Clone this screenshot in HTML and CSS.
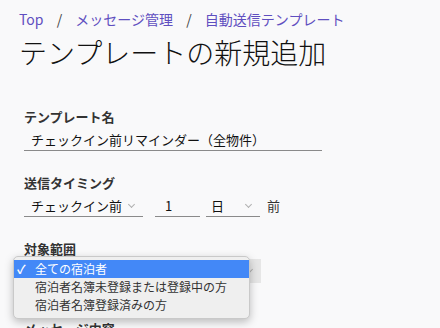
FILE: index.html
```html
<!DOCTYPE html>
<html lang="ja">
<head>
    <meta charset="UTF-8">
    <meta name="viewport" content="width=device-width, initial-scale=1.0">
    <title>テンプレートの新規追加</title>
    <link rel="stylesheet" href="styles.css">
</head>
<body>
    <nav class="breadcrumb">
        <a href="#">Top</a>
        <span class="sep">/</span>
        <a href="#">メッセージ管理</a>
        <span class="sep">/</span>
        <a href="#">自動送信テンプレート</a>
    </nav>
    <h1 class="page-title">テンプレートの新規追加</h1>

    <form class="template-form">
        <div class="field">
            <label class="field-label">テンプレート名</label>
            <div class="text-input wide">チェックイン前リマインダー（全物件）</div>
        </div>

        <div class="field">
            <label class="field-label">送信タイミング</label>
            <div class="timing-row">
                <div class="select-box base">チェックイン前<span class="chevron"></span></div>
                <div class="text-input num">1</div>
                <div class="select-box unit">日<span class="chevron"></span></div>
                <span class="suffix">前</span>
            </div>
        </div>

        <div class="field scope-field">
            <label class="field-label">対象範囲</label>
            <div class="scope-wrap">
                <div class="select-box scope"><span class="chevron"></span></div>
                <ul class="dropdown">
                    <li class="selected"><span class="check">✓</span>全ての宿泊者</li>
                    <li>宿泊者名簿未登録または登録中の方</li>
                    <li>宿泊者名簿登録済みの方</li>
                </ul>
            </div>
        </div>

        <div class="field">
            <label class="field-label">メッセージ内容</label>
        </div>
    </form>
</body>
</html>
```

FILE: styles.css
```css
html, body {
    height: 328px;
    overflow: hidden;
}
body {
    margin: 0;
    padding: 9px 19px 0;
    box-sizing: border-box;
    background: #f9f9fa;
    color: #222;
    font-family: "Noto Sans CJK JP", "Noto Sans", sans-serif;
}
.breadcrumb {
    font-size: 14px;
    line-height: 20px;
}
.breadcrumb a {
    color: #5f4fc0;
    text-decoration: none;
}
.breadcrumb .sep {
    color: #444;
    margin: 0 10px;
}
.page-title {
    margin: 6px 0 0;
    font-size: 28px;
    font-weight: 300;
    line-height: 34px;
    color: #111;
}
.template-form {
    padding-left: 5px;
    margin-top: 39px;
}
.field {
    margin-bottom: 23px;
}
.scope-field {
    margin-bottom: 37px;
}
.field-label {
    display: block;
    font-size: 13px;
    font-weight: bold;
    color: #333;
    line-height: 18px;
}
.text-input, .select-box {
    font-size: 13px;
    line-height: 20px;
    padding-top: 4px;
    color: #111;
    border-bottom: 1px solid #8a8a8a;
    box-sizing: border-box;
}
.text-input {
    padding-left: 7px;
}
.wide {
    width: 298px;
}
.timing-row {
    display: flex;
    align-items: flex-end;
    gap: 12px;
}
.select-box {
    position: relative;
    padding-left: 7px;
}
.chevron {
    position: absolute;
    right: 9px;
    top: 10px;
    width: 4px;
    height: 4px;
    border-right: 1px solid #b0b0b0;
    border-bottom: 1px solid #b0b0b0;
    transform: rotate(45deg);
}
.base {
    width: 119px;
}
.num {
    width: 45px;
    padding-left: 10px;
}
.unit {
    width: 54px;
    margin-left: -6px;
    padding-left: 5px;
}
.suffix {
    font-size: 13px;
    line-height: 20px;
    color: #333;
    margin-left: -5px;
    padding-bottom: 1px;
}
.scope-wrap {
    position: relative;
    height: 24px;
    margin-top: 1px;
}
.scope {
    width: 237px;
    height: 24px;
    padding-top: 0;
    background: #e6e6e6;
    border-bottom: none;
}
.scope .chevron {
    top: 8px;
}
.dropdown {
    position: absolute;
    z-index: 1;
    left: -11px;
    top: -3px;
    width: 237px;
    margin: 0;
    padding: 3px 0 4px;
    list-style: none;
    background: #efefef;
    border: 1px solid #c9c9c9;
    border-radius: 5px;
    box-shadow: 0 3px 8px rgba(0, 0, 0, 0.25);
    font-size: 12px;
    color: #333;
    box-sizing: border-box;
}
.dropdown li {
    height: 18px;
    line-height: 18px;
    padding-left: 21px;
    position: relative;
}
.dropdown li.selected {
    background: #4388f7;
    color: #fff;
}
.check {
    position: absolute;
    left: 3px;
    font-weight: bold;
}
```
